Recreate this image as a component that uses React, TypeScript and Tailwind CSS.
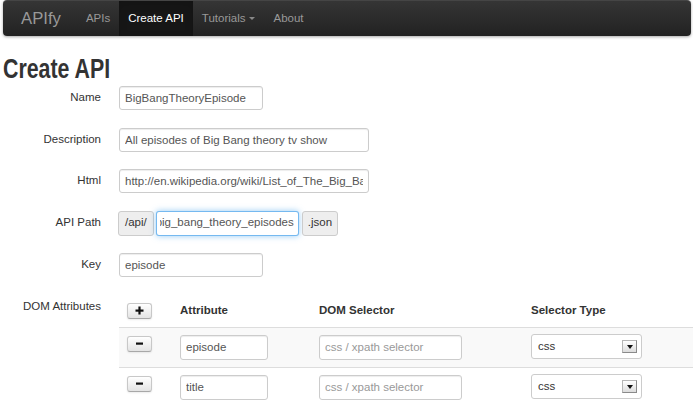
import React from "react";

const base = "font-['Liberation_Sans',Arial,sans-serif]";

function TextInput({ w, value, placeholder }: { w: string; value?: string; placeholder?: string }) {
  return (
    <input
      readOnly
      defaultValue={value}
      placeholder={placeholder}
      className={`${w} h-[24px] border border-[#ccc] rounded-[3px] px-[5px] text-[11.5px] text-[#555] placeholder:text-[#999] bg-white outline-none shadow-[inset_0_1px_1px_rgba(0,0,0,0.075)] ${base}`}
    />
  );
}

function Row({ label, children }: { label: string; children: React.ReactNode }) {
  return (
    <div className="flex items-center mb-[17.5px]">
      <div className="w-[98px] text-right text-[11.5px] text-[#333]">{label}</div>
      <div className="ml-[18px] flex items-center">{children}</div>
    </div>
  );
}

function IconButton({ kind }: { kind: "plus" | "minus" }) {
  return (
    <div className="w-[25px] h-[16px] rounded-[3px] border border-[#c8c8c8] border-b-[#a8a8a8] bg-linear-to-b from-white to-[#e4e4e4] flex items-center justify-center shadow-[0_1px_2px_rgba(0,0,0,0.08)]">
      <svg width="9" height="9" viewBox="0 0 9 9">
        {kind === "plus" ? (
          <>
            <rect x="0.5" y="3.5" width="8" height="2.2" fill="#111" />
            <rect x="3.4" y="0.5" width="2.2" height="8" fill="#111" />
          </>
        ) : (
          <rect x="1" y="3.5" width="7" height="2.2" fill="#111" />
        )}
      </svg>
    </div>
  );
}

function Select() {
  return (
    <div className="w-[111px] h-[25px] border border-[#ccc] rounded-[3px] bg-white flex items-center justify-between pl-[6px] pr-[4px]">
      <span className="text-[11.5px] text-[#333]">css</span>
      <div className="w-[15px] h-[13px] border border-[#b5b5b5] border-r-[#8a8a8a] border-b-[#8a8a8a] bg-linear-to-b from-white to-[#dcdcdc] flex items-center justify-center">
        <div className="w-0 h-0 border-x-[3px] border-x-transparent border-t-[4px] border-t-[#111]" />
      </div>
    </div>
  );
}

function TableRow({ value, striped }: { value: string; striped: boolean }) {
  return (
    <div className={`flex h-[40px] border-t border-[#ddd] ${striped ? "bg-[#f9f9f9]" : "bg-white"}`}>
      <div className="w-[53px] pl-[8px] pt-[8px]">
        <IconButton kind="minus" />
      </div>
      <div className="w-[139px] pl-[8px] pt-[6.5px]">
        <input
          readOnly
          defaultValue={value}
          className={`w-[88px] h-[25px] border border-[#ccc] rounded-[3px] px-[5px] text-[11.5px] text-[#555] bg-white outline-none shadow-[inset_0_1px_1px_rgba(0,0,0,0.075)] ${base}`}
        />
      </div>
      <div className="w-[212px] pl-[8px] pt-[6.5px]">
        <input
          readOnly
          placeholder="css / xpath selector"
          className={`w-[143px] h-[25px] border border-[#ccc] rounded-[3px] px-[5px] text-[11.5px] text-[#555] placeholder:text-[#999] bg-white outline-none shadow-[inset_0_1px_1px_rgba(0,0,0,0.075)] ${base}`}
        />
      </div>
      <div className="flex-1 pl-[8px] pt-[6.5px]">
        <Select />
      </div>
    </div>
  );
}

export default function App() {
  return (
    <div className={`w-[693px] h-[403px] overflow-hidden bg-white ${base}`}>
      {/* Navbar */}
      <div className="ml-[3px] w-[688px] h-[36px] rounded-[4px] border-t border-[#454545] bg-linear-to-b from-[#353535] to-[#222] shadow-[0_1px_3px_rgba(0,0,0,0.35)] flex items-stretch">
        <div className="pl-[18px] pr-[16px] flex items-center text-[16.7px] text-[#999]">APIfy</div>
        <div className="px-[9px] flex items-center text-[11.5px] text-[#999]">APIs</div>
        <div className="px-[9px] flex items-center text-[11.5px] text-white bg-[#161616] shadow-[inset_0_3px_8px_rgba(0,0,0,0.125)]">Create API</div>
        <div className="px-[9px] flex items-center text-[11.5px] text-[#999]">
          Tutorials
          <span className="ml-[4px] w-0 h-0 border-x-[3px] border-x-transparent border-t-[3px] border-t-[#888]" />
        </div>
        <div className="px-[9px] flex items-center text-[11.5px] text-[#999]">About</div>
      </div>

      <div className="pl-[3px]">
        <h1 className="mt-[19px] h-[28px] leading-[28px] text-[27px] font-bold text-[#333] origin-left scale-x-[0.79] whitespace-nowrap">
          Create API
        </h1>

        <div className="mt-[3px]">
          <Row label="Name">
            <TextInput w="w-[144px]" value="BigBangTheoryEpisode" />
          </Row>
          <Row label="Description">
            <TextInput w="w-[250px]" value="All episodes of Big Bang theory tv show" />
          </Row>
          <Row label="Html">
            <TextInput w="w-[250px]" value="http://en.wikipedia.org/wiki/List_of_The_Big_Bang_Theory_episodes" />
          </Row>
          <Row label="API Path">
            <div className="-ml-[1px] flex items-center">
              <div className="h-[25px] px-[6px] flex items-center border border-[#ccc] rounded-[3px] bg-[#eee] text-[11.5px] text-[#333]">
                /api/
              </div>
              <div className="ml-[2px] w-[143px] h-[25px] border border-[rgba(82,168,236,0.8)] rounded-[3px] bg-white shadow-[0_0_6px_rgba(82,168,236,0.6)] pl-[3px] pr-[4px] flex items-center overflow-hidden">
                <div className="flex-1 overflow-hidden flex justify-end whitespace-nowrap text-[11.5px] text-[#555]">
                  big_bang_theory_episodes
                </div>
              </div>
              <div className="ml-[3px] h-[25px] px-[5px] flex items-center border border-[#ccc] rounded-[3px] bg-[#eee] text-[11.5px] text-[#333]">
                .json
              </div>
            </div>
          </Row>
          <Row label="Key">
            <TextInput w="w-[144px]" value="episode" />
          </Row>

          <div className="flex items-start">
            <div className="w-[98px] text-right text-[11.5px] leading-[20px] pt-[1.5px] text-[#333]">DOM Attributes</div>
            <div className="ml-[18px] w-[574px]">
              <div className="flex h-[32px] items-center text-[11.5px] font-bold text-[#333]">
                <div className="w-[53px] pl-[8px]">
                  <IconButton kind="plus" />
                </div>
                <div className="w-[139px] pl-[8px]">Attribute</div>
                <div className="w-[212px] pl-[8px]">DOM Selector</div>
                <div className="flex-1 pl-[8px]">Selector Type</div>
              </div>
              <TableRow value="episode" striped />
              <TableRow value="title" striped={false} />
            </div>
          </div>
        </div>
      </div>
    </div>
  );
}
